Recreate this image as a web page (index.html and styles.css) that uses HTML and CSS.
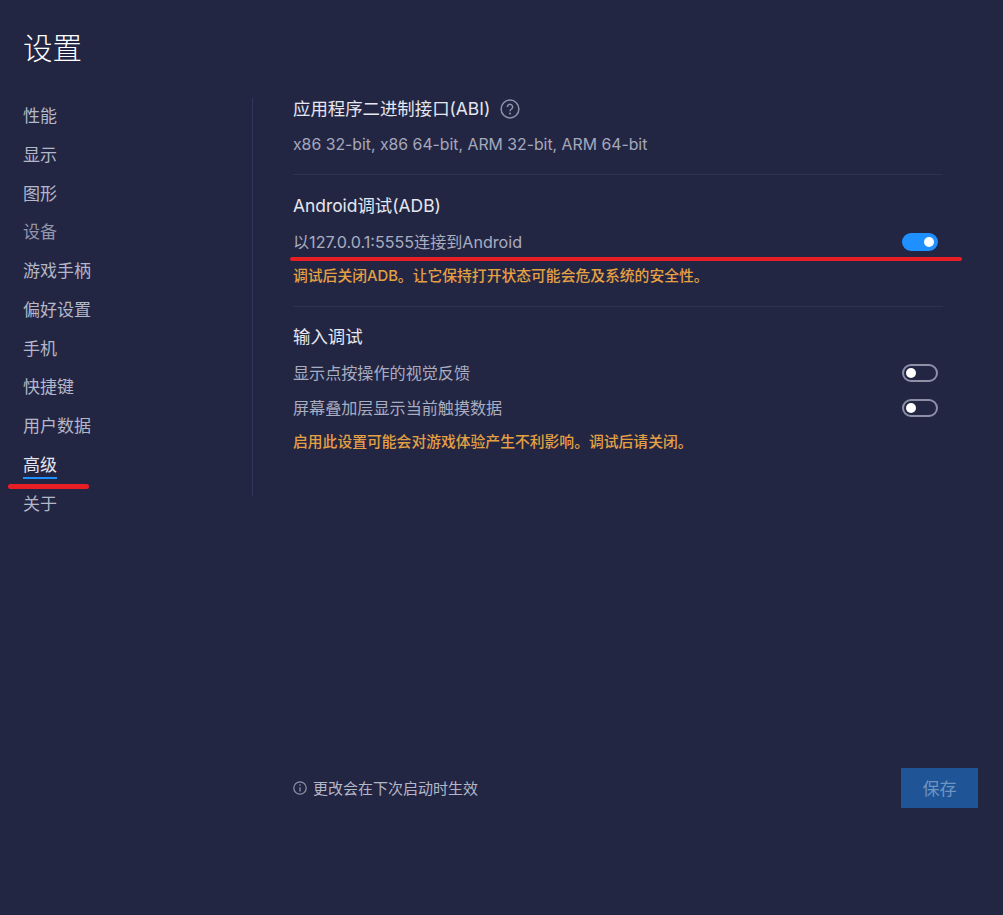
FILE: index.html
```html
<!DOCTYPE html>
<html lang="zh-CN">
<head>
<meta charset="utf-8">
<title>设置</title>
<link rel="stylesheet" href="styles.css">
</head>
<body>
<div class="page">
  <h1 class="title">设置</h1>
  <div class="layout">
    <nav class="nav">
      <a class="nav-item">性能</a>
      <a class="nav-item">显示</a>
      <a class="nav-item">图形</a>
      <a class="nav-item dim">设备</a>
      <a class="nav-item">游戏手柄</a>
      <a class="nav-item">偏好设置</a>
      <a class="nav-item">手机</a>
      <a class="nav-item">快捷键</a>
      <a class="nav-item">用户数据</a>
      <a class="nav-item active">高级</a>
      <a class="nav-item">关于</a>
    </nav>
    <main class="content">
      <section class="section">
        <h2 class="heading">应用程序二进制接口(ABI)
          <svg class="help" viewBox="0 0 20 20" width="20" height="20" aria-hidden="true"><circle cx="10" cy="10" r="8.9" fill="none" stroke="#8f93a8" stroke-width="1.5"/><path d="M7.4 7.9a2.6 2.6 0 1 1 4.1 2.1c-.9.6-1.5 1.1-1.5 2.2" fill="none" stroke="#8f93a8" stroke-width="1.5"/><circle cx="10" cy="14.6" r="1" fill="#8f93a8"/></svg>
        </h2>
        <p class="abi">x86 32-bit, x86 64-bit, ARM 32-bit, ARM 64-bit</p>
      </section>
      <section class="section section-adb">
        <h2 class="heading">Android调试(ADB)</h2>
        <div class="row"><span class="row-text">以127.0.0.1:5555连接到Android</span><span class="switch on"></span></div>
        <p class="warn warn-adb">调试后关闭ADB。让它保持打开状态可能会危及系统的安全性。</p>
      </section>
      <section class="section last">
        <h2 class="heading">输入调试</h2>
        <div class="row"><span class="row-text">显示点按操作的视觉反馈</span><span class="switch"></span></div>
        <div class="row"><span class="row-text">屏幕叠加层显示当前触摸数据</span><span class="switch"></span></div>
        <p class="warn">启用此设置可能会对游戏体验产生不利影响。调试后请关闭。</p>
      </section>
    </main>
  </div>
  <footer class="footer">
    <div class="note">
      <svg class="info" viewBox="0 0 14 14" width="14" height="14" aria-hidden="true"><circle cx="7" cy="7" r="6.2" fill="none" stroke="#8f93a8" stroke-width="1.2"/><path d="M7 6.2v4.4" stroke="#8f93a8" stroke-width="1.3"/><circle cx="7" cy="4" r=".8" fill="#8f93a8"/></svg>
      <span class="note-text">更改会在下次启动时生效</span>
    </div>
    <button class="save"><span class="save-text">保存</span></button>
  </footer>
  <div class="mark mark-nav"></div>
  <div class="mark mark-adb"></div>
</div>
</body>
</html>
```
FILE: styles.css
```css
* { box-sizing: border-box; }
html, body { margin: 0; padding: 0; }
body {
  background: #232643;
  color: #b9bccb;
  font-family: Inter, "Noto Sans CJK SC", sans-serif;
}
.page { position: relative; width: 1003px; height: 915px; overflow: hidden; }
.title {
  margin: 0;
  padding: 28px 0 0 23px;
  height: 97px;
  font-size: 29.5px;
  line-height: 40px;
  font-weight: 300;
  color: #ffffff;
}
.layout { display: flex; height: 671px; }
.nav {
  width: 230px;
  margin-left: 23px;
  margin-top: 1px;
  height: 398px;
  display: flex;
  flex-direction: column;
  gap: 14.75px;
  flex: none;
  align-items: flex-start;
  border-right: 1px solid #33365a;
}
.nav-item { font-size: 17px; line-height: 24px; height: 24px; color: #b4b7c8; }
.nav-item:first-child { margin-top: 6px; }
.nav-item.dim { color: #9296ab; }
.nav-item.active { color: #e4e5ee; height: 24px; box-shadow: 0 2px 0 #1e90ff; }
.content { width: 650px; margin-left: 40px; flex: none; }
.section { border-bottom: 1px solid #2e3150; padding-bottom: 17px; margin-bottom: 19px; }
.section-adb { margin-bottom: 18px; }
.section.last { border-bottom: 0; }
.heading {
  margin: 0;
  display: flex;
  align-items: center;
  gap: 10px;
  font-size: 17.4px;
  line-height: 24px;
  font-weight: 400;
  color: #e6e7ef;
}
.help { flex: none; }
.abi { margin: 12px 0 0; font-size: 15.8px; line-height: 24px; color: #a4a8bc; }
.row {
  display: flex;
  justify-content: space-between;
  align-items: center;
  padding-right: 5px;
  height: 24px;
  margin-top: 11px;
  font-size: 16.1px;
  color: #a9adc0;
}
.heading + .row { margin-top: 12px; }
.row-text { padding-bottom: 2px; }
.switch {
  width: 36px;
  height: 18px;
  border-radius: 9px;
  border: 2px solid #8d90a6;
  display: flex;
  align-items: center;
  justify-content: flex-start;
  padding: 0 2px;
}
.switch::after { content: ""; width: 10px; height: 10px; border-radius: 50%; background: #ffffff; }
.switch.on { background: #1e90ff; border-color: #1e90ff; justify-content: flex-end; }
.warn { margin: 10px 0 0; font-size: 14.8px; line-height: 24px; font-weight: 500; color: #e5a043; }
.warn-adb { margin-bottom: 1px; }
.footer {
  display: flex;
  justify-content: space-between;
  align-items: center;
  height: 40px;
  margin-left: 293px;
  margin-right: 25px;
}
.note { display: flex; align-items: center; gap: 6px; font-size: 15px; color: #b4b7c8; }
.note-text { padding-bottom: 2px; }
.info { flex: none; }
.save {
  width: 77px;
  height: 40px;
  border: 0;
  padding: 0 0 2px;
  background: #1f5596;
  color: #6f94c2;
  font: inherit;
  font-size: 17px;
}
.mark { position: absolute; background: #e81e25; border-radius: 3px; }
.mark-nav { left: 8px; top: 484px; width: 81px; height: 5px; }
.mark-adb { left: 290px; top: 257px; width: 672px; height: 4px; }
```
